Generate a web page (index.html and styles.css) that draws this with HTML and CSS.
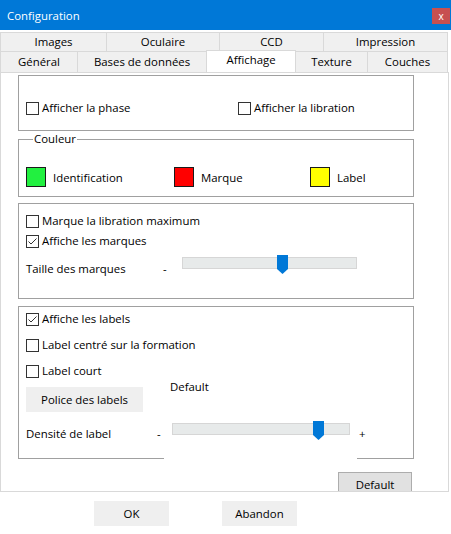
FILE: index.html
```html
<!DOCTYPE html>
<html lang="fr">
<head>
<meta charset="utf-8">
<title>Configuration</title>
<link rel="stylesheet" href="styles.css">
</head>
<body>
<div class="dialog">
  <div class="titlebar">
    <span class="title">Configuration</span>
    <span class="close">x</span>
  </div>

  <div class="tabs">
    <div class="tabrow row1">
      <div class="tab t-images">Images</div>
      <div class="tab t-oculaire">Oculaire</div>
      <div class="tab t-ccd">CCD</div>
      <div class="tab t-impression last">Impression</div>
    </div>
    <div class="tabrow row2">
      <div class="tab t-general">Général</div>
      <div class="tab t-bases">Bases de données</div>
      <div class="tab t-affichage selected">Affichage</div>
      <div class="tab t-texture">Texture</div>
      <div class="tab t-couches last">Couches</div>
    </div>
  </div>

  <div class="page">
    <div class="group g1">
      <div class="two">
        <div class="cb"><span class="box"></span>Afficher la phase</div>
        <div class="cb"><span class="box"></span>Afficher la libration</div>
      </div>
    </div>

    <div class="group g2">
      <span class="legend">Couleur</span>
      <div class="colors">
        <div class="color c1"><span class="swatch green"></span>Identification</div>
        <div class="color c2"><span class="swatch red"></span>Marque</div>
        <div class="color c3"><span class="swatch yellow"></span>Label</div>
      </div>
    </div>

    <div class="group g3">
      <div class="cb"><span class="box"></span>Marque la libration maximum</div>
      <div class="cb gap4"><span class="box"><svg width="11" height="11" viewBox="0 0 11 11"><polyline points="1.5,5.5 4,8 9.5,2.5" fill="none" stroke="#333" stroke-width="1"/></svg></span>Affiche les marques</div>
      <div class="sizerow">
        <span class="slabel">Taille des marques</span>
        <span class="minus">-</span>
        <div class="track track1">
          <svg class="thumb thumb1" width="11" height="19" viewBox="0 0 11 19"><polygon points="0,0 11,0 11,14 5.5,19 0,14" fill="#0078d7"/></svg>
        </div>
      </div>
    </div>

    <div class="group g4">
      <div class="cb"><span class="box"><svg width="11" height="11" viewBox="0 0 11 11"><polyline points="1.5,5.5 4,8 9.5,2.5" fill="none" stroke="#333" stroke-width="1"/></svg></span>Affiche les labels</div>
      <div class="cb gap10"><span class="box"></span>Label centré sur la formation</div>
      <div class="cb gap10"><span class="box"></span>Label court</div>
      <div class="fontrow">
        <div class="btn police">Police des labels</div>
        <span class="fontname">Default</span>
      </div>
      <div class="densrow">
        <span class="dlabel">Densité de label</span>
        <span class="dminus">-</span>
        <div class="trackbox">
          <div class="track track2">
            <svg class="thumb thumb2" width="11" height="19" viewBox="0 0 11 19"><polygon points="0,0 11,0 11,14 5.5,19 0,14" fill="#0078d7"/></svg>
          </div>
        </div>
        <span class="plus">+</span>
      </div>
    </div>

    <div class="defbtn">Default</div>
  </div>

  <div class="buttons">
    <div class="btn action">OK</div>
    <div class="btn action">Abandon</div>
  </div>
</div>
</body>
</html>
```

FILE: styles.css
```css
* { box-sizing: border-box; }
html, body { margin: 0; padding: 0; }
body {
  width: 451px;
  height: 534px;
  background: #ffffff;
  font-family: "Open Sans", "Noto Sans", sans-serif;
  font-size: 11.4px;
  color: #000;
  overflow: hidden;
}

.titlebar {
  height: 30px;
  background: #0078d7;
  display: flex;
  align-items: center;
  padding-left: 7px;
}
.title { color: #fff; font-size: 11.4px; }
.close {
  margin-left: auto;
  margin-right: 1px;
  margin-top: 2px;
  width: 18px;
  height: 16px;
  background: #c75050;
  color: #fff;
  font-size: 10px;
  display: flex;
  align-items: center;
  justify-content: center;
  line-height: 1;
}

.tabs { margin-top: 2px; width: 448px; }
.tabrow { display: flex; }
.row1 { height: 19px; }
.row2 { height: 21px; }
.tab {
  background: #f0f0f0;
  border-top: 1px solid #d9d9d9;
  border-left: 1px solid #d9d9d9;
  display: flex;
  align-items: center;
  justify-content: center;
  line-height: 16px;
  padding-bottom: 1px;
}
.tab.last { border-right: 1px solid #d9d9d9; }
.t-images { width: 106px; }
.t-oculaire { width: 113px; }
.t-ccd { width: 104px; }
.t-impression { width: 125px; }
.t-general { width: 77px; }
.t-bases { width: 129px; }
.t-affichage { width: 90px; }
.t-texture { width: 71px; }
.t-couches { width: 81px; }
.tab.selected {
  background: #fff;
  border-right: 1px solid #d9d9d9;
  margin-top: -1px;
  height: 22px;
  padding-bottom: 3px;
  position: relative;
  z-index: 1;
}
.tab.selected + .tab { border-left: none; }

.page {
  width: 449px;
  height: 420px;
  border: 1px solid #d9d9d9;
  padding: 1px 0 0 17px;
  overflow: hidden;
}

.group {
  width: 396px;
  border: 1px solid #a0a0a0;
  margin-top: 1px;
}

.cb {
  display: flex;
  align-items: center;
  height: 16px;
  line-height: 16px;
  white-space: nowrap;
}
.box {
  width: 13px;
  height: 13px;
  border: 1px solid #333;
  background: #fff;
  margin-right: 3px;
  flex: none;
  display: flex;
}
.box svg { display: block; }

.g1 { height: 56px; padding: 24px 0 0 7px; }
.two { display: grid; grid-template-columns: 212px auto; }

.g2 {
  height: 58px;
  margin-top: 8px;
  padding: 27px 0 0 7px;
  position: relative;
}
.legend {
  position: absolute;
  left: 14px;
  top: -9px;
  padding: 0 1px;
  background: #fff;
  line-height: 16px;
}
.colors { display: flex; }
.color { display: flex; align-items: center; height: 20px; }
.c1 { width: 148px; }
.c2 { width: 136px; }
.swatch {
  width: 20px;
  height: 20px;
  border: 1px solid #1a1a1a;
  margin-right: 7px;
  flex: none;
}
.green { background: #22f040; }
.red { background: #ff0000; }
.yellow { background: #ffff00; }

.g3 {
  height: 96px;
  margin-top: 6px;
  padding: 9px 0 0 7px;
}
.gap4 { margin-top: 4px; }
.gap10 { margin-top: 10px; }
.sizerow { display: flex; margin-top: 4px; }
.slabel { width: 137px; padding-top: 8px; line-height: 16px; }
.minus { width: 19px; padding-top: 8px; line-height: 16px; }

.track {
  height: 12px;
  background: #e7eaea;
  border: 1px solid #d6d6d6;
  position: relative;
}
.track1 { width: 175px; margin-top: 4px; }
.thumb { position: absolute; top: -3px; display: block; }
.thumb1 { left: 94px; }

.g4 {
  height: 153px;
  margin-top: 7px;
  padding: 4px 0 0 7px;
}
.fontrow { display: flex; align-items: flex-start; }
.btn {
  background: #efefef;
  display: flex;
  align-items: center;
  justify-content: center;
  white-space: nowrap;
}
.police { width: 117px; height: 25px; margin-top: 8px; }
.fontname { margin-left: 27px; line-height: 16px; }

.densrow { display: flex; margin-top: 4px; }
.dlabel { width: 131px; padding-top: 10px; line-height: 16px; }
.dminus { width: 7px; padding-top: 10px; line-height: 16px; }
.trackbox {
  width: 193px;
  height: 43px;
  background: #fff;
  padding: 7px 0 0 8px;
}
.track2 { width: 178px; }
.thumb2 { left: 140px; }
.plus { margin-left: 2px; padding-top: 10px; line-height: 16px; }

.defbtn {
  margin: 13px 0 0 320px;
  width: 74px;
  height: 24px;
  background: #e1e1e1;
  border: 1px solid #adadad;
  display: flex;
  align-items: center;
  justify-content: center;
}

.buttons {
  display: flex;
  gap: 53px;
  padding-left: 94px;
  margin-top: 9px;
}
.action { width: 75px; height: 25px; }
```
